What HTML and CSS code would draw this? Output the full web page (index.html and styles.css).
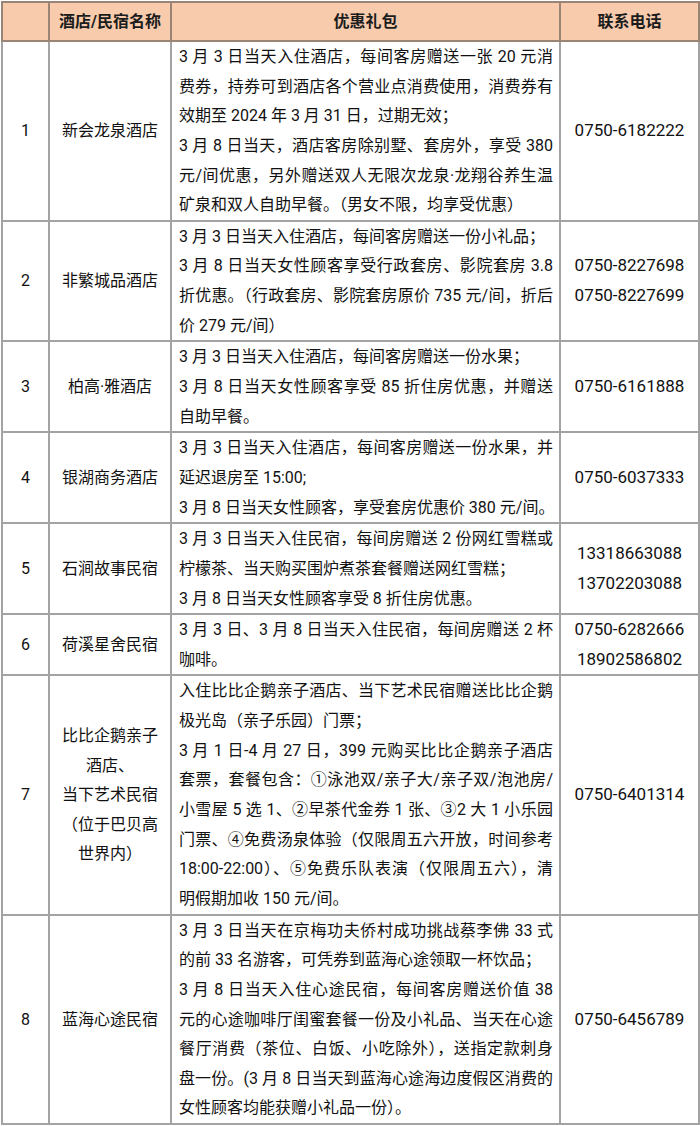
FILE: index.html
```html
<!DOCTYPE html>
<html lang="zh-CN">
<head>
<meta charset="utf-8">
<title>优惠礼包</title>
<link rel="stylesheet" href="styles.css">
</head>
<body>
<table class="offers">
  <colgroup>
    <col class="c-no">
    <col class="c-name">
    <col class="c-gift">
    <col class="c-tel">
  </colgroup>
  <thead>
    <tr>
      <th></th>
      <th>酒店/民宿名称</th>
      <th>优惠礼包</th>
      <th>联系电话</th>
    </tr>
  </thead>
  <tbody>
    <tr>
      <td class="no">1</td>
      <td class="name">新会龙泉酒店</td>
      <td class="gift">
        <span class="ln j">3 月 3 日当天入住酒店，每间客房赠送一张 20 元消</span>
        <span class="ln j">费券，持券可到酒店各个营业点消费使用，消费券有</span>
        <span class="ln">效期至 2024 年 3 月 31 日，过期无效；</span>
        <span class="ln j">3 月 8 日当天，酒店客房除别墅、套房外，享受 380</span>
        <span class="ln j">元/间优惠，另外赠送双人无限次龙泉·龙翔谷养生温</span>
        <span class="ln">矿泉和双人自助早餐。（男女不限，均享受优惠）</span>
      </td>
      <td class="tel">0750-6182222</td>
    </tr>
    <tr>
      <td class="no">2</td>
      <td class="name">非繁城品酒店</td>
      <td class="gift">
        <span class="ln">3 月 3 日当天入住酒店，每间客房赠送一份小礼品；</span>
        <span class="ln j">3 月 8 日当天女性顾客享受行政套房、影院套房 3.8</span>
        <span class="ln j">折优惠。（行政套房、影院套房原价 735 元/间，折后</span>
        <span class="ln">价 279 元/间）</span>
      </td>
      <td class="tel">0750-8227698<br>0750-8227699</td>
    </tr>
    <tr>
      <td class="no">3</td>
      <td class="name">柏高·雅酒店</td>
      <td class="gift">
        <span class="ln">3 月 3 日当天入住酒店，每间客房赠送一份水果；</span>
        <span class="ln j">3 月 8 日当天女性顾客享受 85 折住房优惠，并赠送</span>
        <span class="ln">自助早餐。</span>
      </td>
      <td class="tel">0750-6161888</td>
    </tr>
    <tr>
      <td class="no">4</td>
      <td class="name">银湖商务酒店</td>
      <td class="gift">
        <span class="ln j">3 月 3 日当天入住酒店，每间客房赠送一份水果，并</span>
        <span class="ln">延迟退房至 15:00;</span>
        <span class="ln">3 月 8 日当天女性顾客，享受套房优惠价 380 元/间。</span>
      </td>
      <td class="tel">0750-6037333</td>
    </tr>
    <tr>
      <td class="no">5</td>
      <td class="name">石涧故事民宿</td>
      <td class="gift">
        <span class="ln j">3 月 3 日当天入住民宿，每间房赠送 2 份网红雪糕或</span>
        <span class="ln">柠檬茶、当天购买围炉煮茶套餐赠送网红雪糕；</span>
        <span class="ln">3 月 8 日当天女性顾客享受 8 折住房优惠。</span>
      </td>
      <td class="tel">13318663088<br>13702203088</td>
    </tr>
    <tr>
      <td class="no">6</td>
      <td class="name">荷溪星舍民宿</td>
      <td class="gift">
        <span class="ln j">3 月 3 日、3 月 8 日当天入住民宿，每间房赠送 2 杯</span>
        <span class="ln">咖啡。</span>
      </td>
      <td class="tel">0750-6282666<br>18902586802</td>
    </tr>
    <tr>
      <td class="no">7</td>
      <td class="name">比比企鹅亲子<br>酒店、<br>当下艺术民宿<br>（位于巴贝高<br>世界内）</td>
      <td class="gift">
        <span class="ln j">入住比比企鹅亲子酒店、当下艺术民宿赠送比比企鹅</span>
        <span class="ln">极光岛（亲子乐园）门票；</span>
        <span class="ln j">3 月 1 日-4 月 27 日，399 元购买比比企鹅亲子酒店</span>
        <span class="ln j">套票，套餐包含：①泳池双/亲子大/亲子双/泡池房/</span>
        <span class="ln j">小雪屋  5 选 1、②早茶代金券 1 张、③2 大 1 小乐园</span>
        <span class="ln j">门票、④免费汤泉体验（仅限周五六开放，时间参考</span>
        <span class="ln j">18:00-22:00）、⑤免费乐队表演（仅限周五六），清</span>
        <span class="ln">明假期加收 150 元/间。</span>
      </td>
      <td class="tel">0750-6401314</td>
    </tr>
    <tr>
      <td class="no">8</td>
      <td class="name">蓝海心途民宿</td>
      <td class="gift">
        <span class="ln j">3 月 3 日当天在京梅功夫侨村成功挑战蔡李佛 33 式</span>
        <span class="ln">的前 33 名游客，可凭券到蓝海心途领取一杯饮品；</span>
        <span class="ln j">3 月 8 日当天入住心途民宿，每间客房赠送价值 38</span>
        <span class="ln j">元的心途咖啡厅闺蜜套餐一份及小礼品、当天在心途</span>
        <span class="ln j">餐厅消费（茶位、白饭、小吃除外），送指定款刺身</span>
        <span class="ln j">盘一份。(3 月 8 日当天到蓝海心途海边度假区消费的</span>
        <span class="ln">女性顾客均能获赠小礼品一份）。</span>
      </td>
      <td class="tel">0750-6456789</td>
    </tr>
  </tbody>
</table>
</body>
</html>
```

FILE: styles.css
```css
html, body {
  margin: 0;
  padding: 0;
  background: #ffffff;
}

body {
  font-family: Roboto, "Noto Sans CJK SC", sans-serif;
  color: #111111;
  font-size: 16px;
}

.offers {
  margin: 1px 0 0 1px;
  width: 697px;
  border-collapse: collapse;
  table-layout: fixed;
  border: 2px solid #8f8f8f;
}

.c-no { width: 47px; }
.c-name { width: 122px; }
.c-gift { width: 389px; }
.c-tel { width: 139px; }

.offers th {
  background: #f7cbac;
  height: 37px;
  padding: 0;
  font-weight: 700;
  font-size: 16px;
  line-height: 20px;
  text-align: center;
  vertical-align: middle;
  border: 2px solid #9a8476;
  color: #1c1c1c;
}

.offers td {
  border: 2px solid #a3a3a3;
  padding: 0 6px;
  vertical-align: middle;
  line-height: 29.64px;
  text-align: center;
}

.offers td.gift {
  text-align: left;
  padding: 0 6px 0 7px;
}

.ln {
  display: block;
  white-space: nowrap;
}

.ln.j {
  text-align: justify;
  text-align-last: justify;
  white-space: normal;
}

.tel {
  font-size: 17px;
}
```
